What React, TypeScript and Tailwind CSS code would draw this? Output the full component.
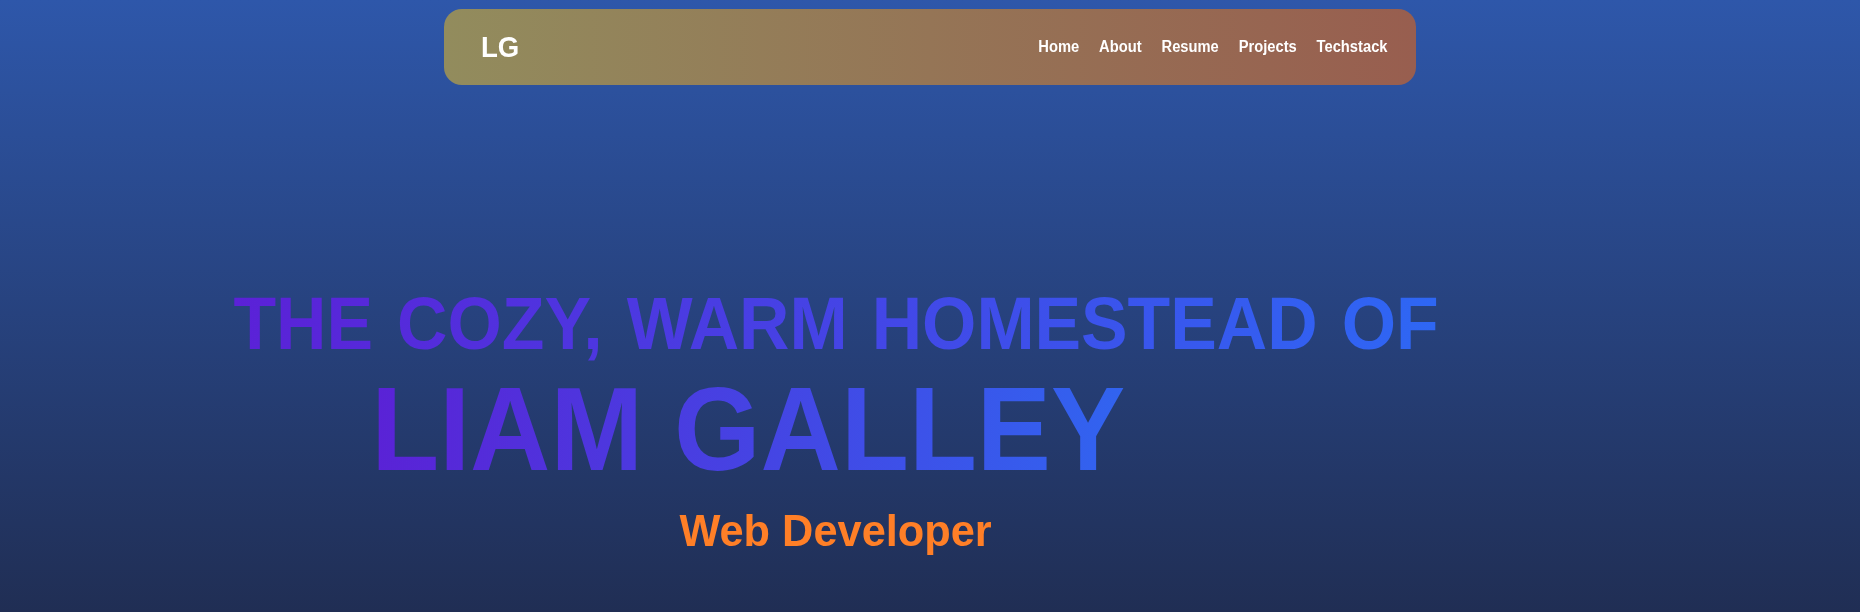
const links = ["Home", "About", "Resume", "Projects", "Techstack"];

export default function App() {
  return (
    <div className="min-h-screen bg-linear-to-b/srgb from-[#2e57aa] to-[#202e54] font-['Liberation_Sans',Arial,sans-serif]">
      <div className="flex justify-center pt-[9px]">
        <nav className="flex h-[76px] w-[972px] items-center justify-between rounded-[18px] bg-linear-to-r/srgb from-[#928c5d] to-[#985e4f] pl-[37px] pr-[29px]">
          <span className="origin-left scale-x-[0.92] text-[30px] font-bold leading-none text-white">LG</span>
          <ul className="flex origin-right scale-x-[0.92] gap-[21.6px] text-[16px] font-bold leading-none text-white">
            {links.map((l) => (
              <li key={l}>
                <a href="#">{l}</a>
              </li>
            ))}
          </ul>
        </nav>
      </div>
      <section className="flex w-[1672px] flex-col items-center pt-[202px]">
        <h2 className="scale-x-[0.943] whitespace-nowrap bg-linear-to-r/srgb from-[#5b21d7] to-[#2e67f4] bg-clip-text text-[74px] font-bold leading-none text-transparent [word-spacing:5px]">
          THE COZY, WARM HOMESTEAD OF
        </h2>
        <h1 className="mr-[176px] mt-[8px] scale-x-[0.935] whitespace-nowrap bg-linear-to-r/srgb from-[#5a22d6] to-[#3164f0] bg-clip-text text-[119px] font-bold leading-none text-transparent">
          LIAM GALLEY
        </h1>
        <p className="mt-[21px] scale-x-[0.985] whitespace-nowrap text-[44px] font-bold leading-none text-[#ff7f27]">
          Web Developer
        </p>
      </section>
    </div>
  );
}
